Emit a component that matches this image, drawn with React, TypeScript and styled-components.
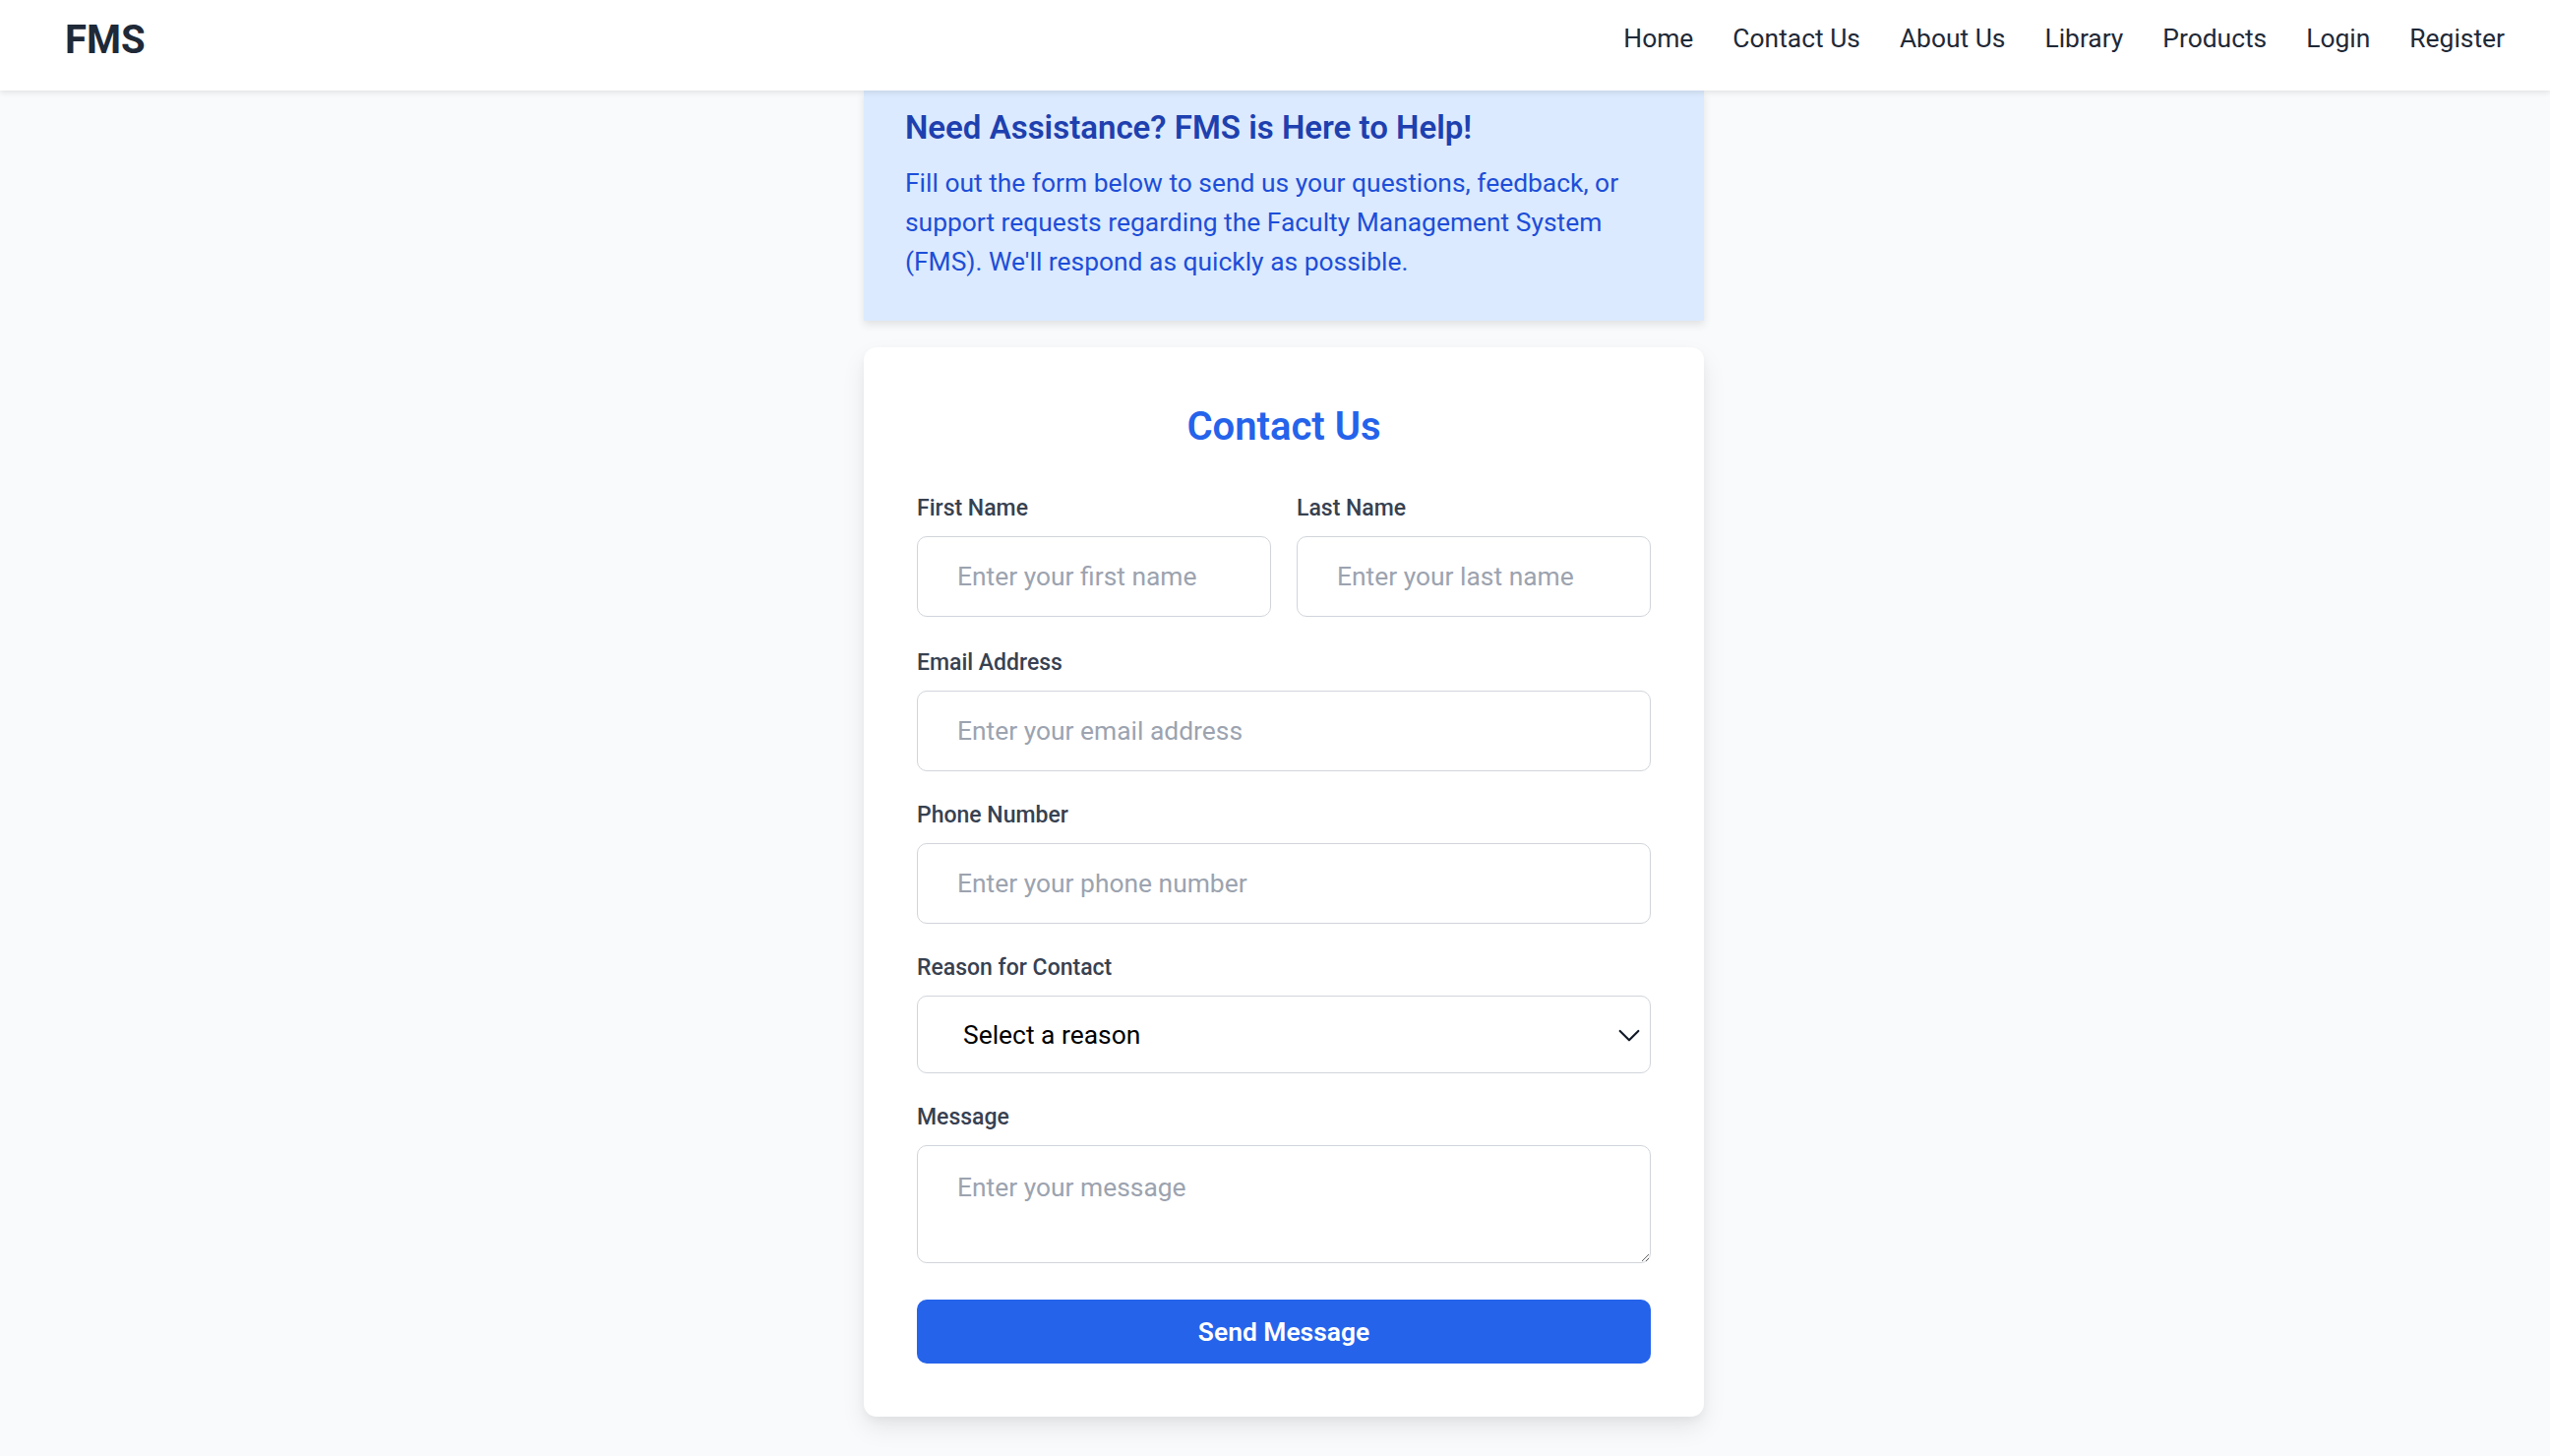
import React from "react";
import styled, { createGlobalStyle } from "styled-components";

const FONT = `"Segoe UI", Roboto, "Noto Sans", Arial, sans-serif`;

const GlobalStyle = createGlobalStyle`
  * { box-sizing: border-box; }
  body {
    margin: 0;
    background: #f9fafb;
    font-family: ${FONT};
    color: #1f2937;
  }
`;

const Header = styled.header`
  position: relative;
  z-index: 2;
  height: 92px;
  background: #ffffff;
  box-shadow: 0 2px 6px rgba(0, 0, 0, 0.1);
  display: flex;
  align-items: flex-start;
  justify-content: space-between;
  padding: 0 46px 0 66px;
`;

const Brand = styled.div`
  height: 80px;
  display: flex;
  align-items: center;
  font-size: 40px;
  font-weight: 700;
  color: #1f2937;
`;

const NavList = styled.nav`
  height: 78px;
  display: flex;
  align-items: center;
  gap: 40px;
`;

const NavLink = styled.a`
  font-size: 26.4px;
  color: #1f2937;
  text-decoration: none;
`;

const Main = styled.main`
  display: flex;
  justify-content: center;
  padding: 0 0 36px 18px;
`;

const Column = styled.div`
  width: 854px;
  display: flex;
  flex-direction: column;
  gap: 27px;
`;

const InfoBox = styled.section`
  background: #dbeafe;
  padding: 15px 40px 40px 42px;
  box-shadow: 0 4px 8px rgba(0, 0, 0, 0.1);
`;

const InfoTitle = styled.h2`
  margin: 0 0 13px;
  font-size: 33px;
  line-height: 46px;
  font-weight: 600;
  color: #1e40af;
`;

const InfoText = styled.p`
  margin: 0;
  font-size: 26.4px;
  line-height: 40px;
  color: #1d4ed8;
`;

const Card = styled.section`
  background: #ffffff;
  border-radius: 13px;
  padding: 54px;
  box-shadow: 0 12px 24px rgba(0, 0, 0, 0.08), 0 4px 8px rgba(0, 0, 0, 0.04);
`;

const CardTitle = styled.h1`
  margin: 0 0 40px;
  text-align: center;
  font-size: 40px;
  line-height: 53px;
  font-weight: 600;
  color: #2563eb;
`;

const Form = styled.form`
  display: flex;
  flex-direction: column;
  gap: 28px;
`;

const Row = styled.div`
  display: grid;
  grid-template-columns: 1fr 1fr;
  gap: 26px;
  margin-bottom: 2px;
`;

const Field = styled.div`
  display: flex;
  flex-direction: column;
`;

const Label = styled.label`
  font-size: 23px;
  line-height: 33px;
  font-weight: 500;
  color: #374151;
  margin-bottom: 12px;
`;

const fieldBase = `
  width: 100%;
  border: 1.5px solid #d1d5db;
  border-radius: 10px;
  background: #ffffff;
  font-family: ${FONT};
  font-size: 26.4px;
  color: #111827;
  outline: none;
  &::placeholder { color: #9ca3af; }
`;

const Input = styled.input`
  ${fieldBase}
  height: 82px;
  padding: 0 40px;
`;

const SelectWrap = styled.div`
  position: relative;
`;

const Select = styled.select`
  ${fieldBase}
  height: 79px;
  padding: 0 40px 0 46px;
  appearance: none;
  color: #000000;
`;

const Chevron = styled.svg`
  position: absolute;
  right: 6px;
  top: 50%;
  transform: translateY(-50%);
  width: 32px;
  height: 32px;
  pointer-events: none;
`;

const TextArea = styled.textarea`
  ${fieldBase}
  height: 120px;
  padding: 22px 40px;
  line-height: 40px;
  resize: vertical;
  display: block;
`;

const SubmitButton = styled.button`
  margin-top: 9px;
  height: 65px;
  border: none;
  border-radius: 10px;
  background: #2563eb;
  color: #ffffff;
  font-family: ${FONT};
  font-size: 26.4px;
  font-weight: 600;
  cursor: pointer;
`;

const links = ["Home", "Contact Us", "About Us", "Library", "Products", "Login", "Register"];

export default function App() {
  return (
    <>
      <GlobalStyle />
      <Header>
        <Brand>FMS</Brand>
        <NavList>
          {links.map((l) => (
            <NavLink key={l} href="#">
              {l}
            </NavLink>
          ))}
        </NavList>
      </Header>
      <Main>
        <Column>
          <InfoBox>
            <InfoTitle>Need Assistance? FMS is Here to Help!</InfoTitle>
            <InfoText>
              Fill out the form below to send us your questions, feedback, or
              support requests regarding the Faculty Management System (FMS).
              We'll respond as quickly as possible.
            </InfoText>
          </InfoBox>
          <Card>
            <CardTitle>Contact Us</CardTitle>
            <Form onSubmit={(e) => e.preventDefault()}>
              <Row>
                <Field>
                  <Label>First Name</Label>
                  <Input placeholder="Enter your first name" />
                </Field>
                <Field>
                  <Label>Last Name</Label>
                  <Input placeholder="Enter your last name" />
                </Field>
              </Row>
              <Field>
                <Label>Email Address</Label>
                <Input type="email" placeholder="Enter your email address" />
              </Field>
              <Field>
                <Label>Phone Number</Label>
                <Input type="tel" placeholder="Enter your phone number" />
              </Field>
              <Field>
                <Label>Reason for Contact</Label>
                <SelectWrap>
                  <Select defaultValue="">
                    <option value="">Select a reason</option>
                    <option value="support">Technical Support</option>
                    <option value="feedback">Feedback</option>
                    <option value="other">Other</option>
                  </Select>
                  <Chevron viewBox="0 0 24 24" fill="none" stroke="#111827" strokeWidth="1.6" strokeLinecap="round" strokeLinejoin="round">
                    <path d="M5 9l7 7 7-7" />
                  </Chevron>
                </SelectWrap>
              </Field>
              <Field>
                <Label>Message</Label>
                <TextArea placeholder="Enter your message" />
              </Field>
              <SubmitButton type="submit">Send Message</SubmitButton>
            </Form>
          </Card>
        </Column>
      </Main>
    </>
  );
}
